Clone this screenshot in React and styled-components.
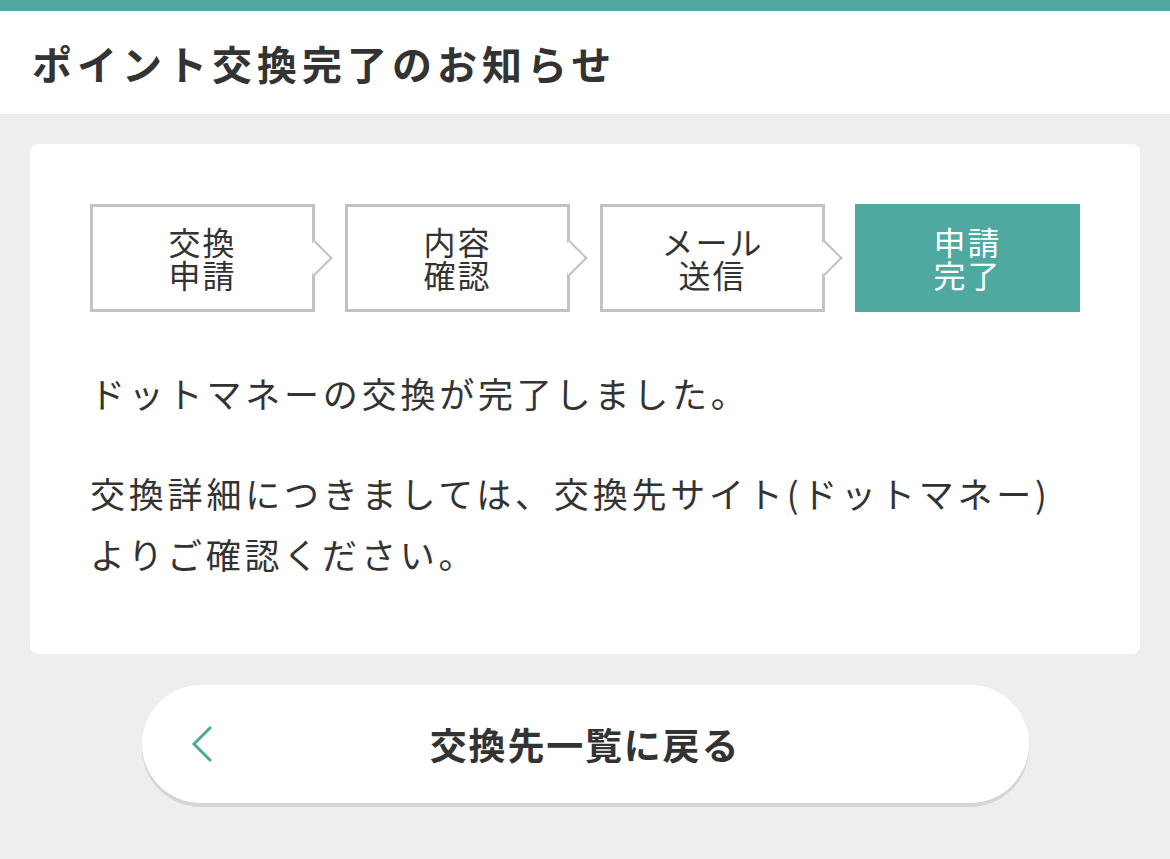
import styled, { createGlobalStyle } from "styled-components";

const steps = [
  { id: 1, label: ["交換", "申請"] },
  { id: 2, label: ["内容", "確認"] },
  { id: 3, label: ["メール", "送信"] },
  { id: 4, label: ["申請", "完了"], active: true },
];

const GlobalStyle = createGlobalStyle`
  body {
    margin: 0;
    background: #eeeeee;
    font-family: "Noto Sans CJK JP", "Noto Sans", sans-serif;
    color: #333333;
  }
`;

const Page = styled.div`
  min-height: 859px;
  border-top: 11px solid #50a9a0;
`;

const Header = styled.header`
  height: 103px;
  background: #ffffff;
  display: flex;
  align-items: center;
  padding-left: 32px;
`;

const Title = styled.h1`
  margin: 0;
  font-size: 40px;
  font-weight: 700;
  letter-spacing: 5px;
`;

const Main = styled.main`
  padding: 30px 30px;
`;

const Card = styled.section`
  background: #ffffff;
  border-radius: 8px;
  padding: 60px 60px 70px;
`;

const StepList = styled.ol`
  list-style: none;
  margin: 0;
  padding: 0;
  display: grid;
  grid-template-columns: repeat(4, 1fr);
  gap: 30px;
`;

const Step = styled.li`
  position: relative;
  height: 108px;
  box-sizing: border-box;
  display: flex;
  flex-direction: column;
  align-items: center;
  justify-content: center;
  font-size: 32px;
  line-height: 33px;
  letter-spacing: 2px;
  background: ${(p) => (p.$active ? "#50a9a0" : "#ffffff")};
  color: ${(p) => (p.$active ? "#ffffff" : "#333333")};
  border: ${(p) => (p.$active ? "none" : "3px solid #c2c2c2")};

  &::after {
    content: "";
    display: ${(p) => (p.$active ? "none" : "block")};
    position: absolute;
    top: 50%;
    right: -3px;
    width: 25px;
    height: 25px;
    box-sizing: border-box;
    background: #ffffff;
    border-top: 2px solid #c2c2c2;
    border-right: 2px solid #c2c2c2;
    transform: translate(50%, -50%) rotate(45deg);
  }
`;

const StepLine = styled.span`
  display: block;
  height: 33px;
`;

const Message = styled.p`
  margin: 50px 0 0;
  font-size: 35px;
  line-height: 61px;
  letter-spacing: 3.8px;
  & + & {
    margin-top: 39px;
  }
`;

const BackButton = styled.button`
  position: relative;
  display: flex;
  align-items: center;
  justify-content: center;
  width: 887px;
  height: 118px;
  margin: 31px auto 0;
  border: none;
  border-radius: 59px;
  background: #ffffff;
  box-shadow: 0 4px 0 rgba(0, 0, 0, 0.1);
  font-family: inherit;
  font-size: 37px;
  font-weight: 700;
  letter-spacing: 1.8px;
  color: #333333;
  cursor: pointer;

  svg {
    position: absolute;
    left: 46px;
    top: 50%;
    transform: translateY(-50%);
  }
`;

const ChevronLeft = () => (
  <svg width="30" height="40" viewBox="0 0 30 40" fill="none">
    <path d="M23 3 L6 20 L23 37" stroke="#50a9a0" strokeWidth="3" />
  </svg>
);

export default function App() {
  return (
    <Page>
      <GlobalStyle />
      <Header>
        <Title>ポイント交換完了のお知らせ</Title>
      </Header>
      <Main>
        <Card>
          <StepList>
            {steps.map((step) => (
              <Step key={step.id} $active={step.active}>
                <StepLine>{step.label[0]}</StepLine>
                <StepLine>{step.label[1]}</StepLine>
              </Step>
            ))}
          </StepList>
          <Message>ドットマネーの交換が完了しました。</Message>
          <Message>
            交換詳細につきましては、交換先サイト(ドットマネー)
            <br />
            よりご確認ください。
          </Message>
        </Card>
        <BackButton>
          <ChevronLeft />
          交換先一覧に戻る
        </BackButton>
      </Main>
    </Page>
  );
}
